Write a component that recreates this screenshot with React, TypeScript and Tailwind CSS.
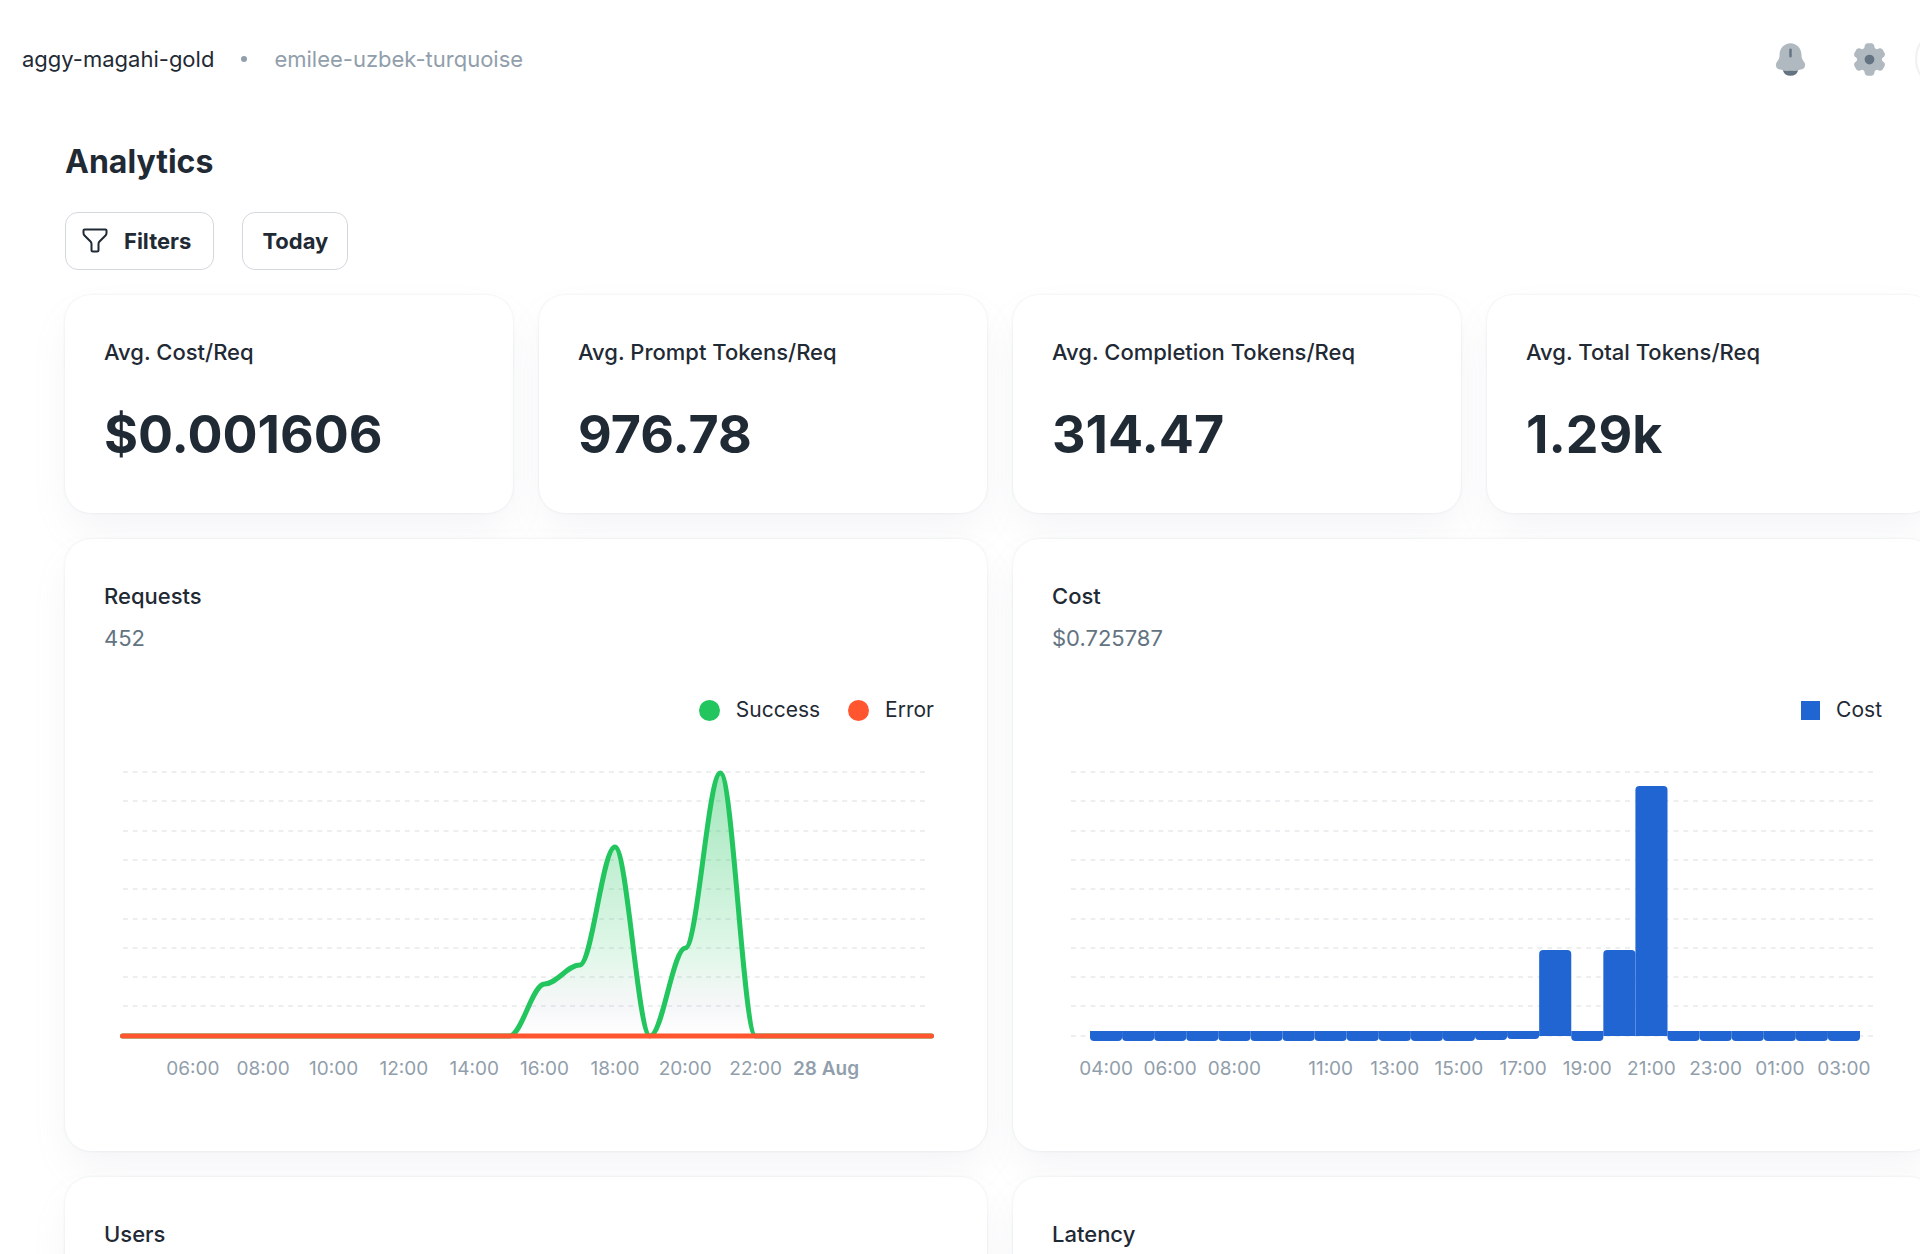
import React from "react";
import clsx from "clsx";

const HOURS = 24;
const GRID_LINES = [47, 76, 106, 135, 164, 194, 223, 252, 281];
const BASELINE = 311;

const stats = [
  { label: "Avg. Cost/Req", value: "$0.001606" },
  { label: "Avg. Prompt Tokens/Req", value: "976.78" },
  { label: "Avg. Completion Tokens/Req", value: "314.47" },
  { label: "Avg. Total Tokens/Req", value: "1.29k" },
];

// height above the baseline for each hour, starting at 04:00
const successSeries = [0, 0, 0, 0, 0, 0, 0, 0, 0, 0, 0, 0, 52, 71, 189, 0, 88, 263, 0, 0, 0, 0, 0, 0];

const requestTicks = [
  { hour: 2, label: "06:00" },
  { hour: 4, label: "08:00" },
  { hour: 6, label: "10:00" },
  { hour: 8, label: "12:00" },
  { hour: 10, label: "14:00" },
  { hour: 12, label: "16:00" },
  { hour: 14, label: "18:00" },
  { hour: 16, label: "20:00" },
  { hour: 18, label: "22:00" },
  { hour: 20, label: "28 Aug", bold: true },
];

const costSeries = [0, 0, 0, 0, 0, 0, 0, 0, 0, 0, 0, 0, 1, 2, 86, 0, 86, 250, 0, 0, 0, 0, 0, 0];

const costTicks = [
  { hour: 0, label: "04:00" },
  { hour: 2, label: "06:00" },
  { hour: 4, label: "08:00" },
  { hour: 7, label: "11:00" },
  { hour: 9, label: "13:00" },
  { hour: 11, label: "15:00" },
  { hour: 13, label: "17:00" },
  { hour: 15, label: "19:00" },
  { hour: 17, label: "21:00" },
  { hour: 19, label: "23:00" },
  { hour: 21, label: "01:00" },
  { hour: 23, label: "03:00" },
];

const BellIcon = () => (
  <svg viewBox="0 0 24 24" className="size-[39px]" fill="currentColor" aria-hidden="true">
    <path
      opacity="0.5"
      d="M18.75 9v.704c0 .845.24 1.671.692 2.374l1.108 1.723c1.011 1.574.239 3.713-1.52 4.21a25.8 25.8 0 0 1-14.06 0c-1.759-.497-2.531-2.636-1.52-4.21l1.108-1.723a4.4 4.4 0 0 0 .693-2.374V9c0-3.866 3.022-7 6.749-7s6.75 3.134 6.75 7"
    />
    <path d="M12.75 6a.75.75 0 0 0-1.5 0v4a.75.75 0 0 0 1.5 0zM7.243 18.545a5.002 5.002 0 0 0 9.513 0c-3.145.59-6.367.59-9.513 0" />
  </svg>
);

const GearIcon = () => (
  <svg viewBox="0.5 0 24 24" className="size-[39px]" fill="currentColor" aria-hidden="true">
    <path
      opacity="0.5"
      d="M14.279 2.152C13.909 2 13.439 2 12.5 2s-1.408 0-1.779.152a2 2 0 0 0-1.09 1.083c-.094.223-.13.484-.145.863a1.62 1.62 0 0 1-.796 1.353 1.64 1.64 0 0 1-1.579.008c-.338-.178-.583-.276-.825-.308a2.03 2.03 0 0 0-1.49.396c-.318.242-.553.646-1.022 1.453-.47.807-.704 1.21-.757 1.605-.07.526.074 1.058.4 1.479.148.192.357.353.68.555.477.297.783.803.783 1.361s-.306 1.064-.782 1.36c-.324.203-.533.364-.682.556a2 2 0 0 0-.399 1.479c.053.394.287.798.757 1.605s.704 1.21 1.022 1.453c.424.323.96.465 1.49.396.242-.032.487-.13.825-.308a1.64 1.64 0 0 1 1.58.008c.486.28.774.795.795 1.353.015.38.051.64.145.863.204.49.596.88 1.09 1.083.37.152.84.152 1.779.152s1.409 0 1.779-.152a2 2 0 0 0 1.09-1.083c.094-.223.13-.483.145-.863.02-.558.309-1.074.796-1.353a1.64 1.64 0 0 1 1.579-.008c.338.178.583.276.825.308.53.07 1.066-.073 1.49-.396.318-.242.553-.646 1.022-1.453.47-.807.704-1.21.757-1.605a2 2 0 0 0-.4-1.479c-.148-.192-.357-.353-.68-.555-.477-.297-.783-.803-.783-1.361s.306-1.064.782-1.36c.324-.203.533-.364.682-.556a2 2 0 0 0 .399-1.479c-.053-.394-.287-.798-.757-1.605s-.704-1.21-1.022-1.453a2.03 2.03 0 0 0-1.49-.396c-.242.032-.487.13-.825.308a1.64 1.64 0 0 1-1.58-.008 1.62 1.62 0 0 1-.795-1.353c-.015-.38-.051-.64-.145-.863a2 2 0 0 0-1.09-1.083"
    />
    <circle cx="12.5" cy="12" r="3" />
  </svg>
);

const FilterIcon = () => (
  <svg viewBox="0 0 26 26" className="size-[26px]" fill="none" stroke="currentColor" strokeWidth="2" strokeLinejoin="round" aria-hidden="true">
    <path d="M2.5 1.5h21q1 0 1 1V5q0 1.5-1 2.5l-6 6q-1 1-1 2.500v6q0 1.500-1.500 1.500h-4q-1.500 0-1.500-1.500v-6q0-1.500-1-2.500l-6-6q-1-1-1-2.500V2.500q0-1 1-1z" />
  </svg>
);

const Card: React.FC<{ className?: string; children: React.ReactNode }> = ({ className, children }) => (
  <section
    className={clsx(
      "rounded-[26px] bg-white px-[39px] pt-[39px] shadow-[0_0_3px_rgba(145,158,171,0.2),0_19px_39px_-6px_rgba(145,158,171,0.12)]",
      className,
    )}
  >
    {children}
  </section>
);

const CardTitle: React.FC<{ children: React.ReactNode }> = ({ children }) => (
  <h2 className="text-[22px] leading-9 font-medium">{children}</h2>
);

const Legend: React.FC<{ items: { label: string; marker: string }[] }> = ({ items }) => (
  <ul className="mt-[39px] flex justify-end gap-7 pr-[14px] text-[21px] leading-[30px]">
    {items.map((item) => (
      <li key={item.label} className="flex items-center gap-4">
        <span className={item.marker} />
        {item.label}
      </li>
    ))}
  </ul>
);

const GridLines: React.FC<{ from: number; to: number; rows: number[] }> = ({ from, to, rows }) => (
  <g stroke="#919eab" strokeOpacity="0.24" strokeWidth="1.5" strokeDasharray="4.86">
    {rows.map((y) => (
      <line key={y} x1={from} x2={to} y1={y} y2={y} />
    ))}
  </g>
);

const TickLabel: React.FC<{ x: number; label: string; bold?: boolean }> = ({ x, label, bold }) => (
  <text x={x} y={350} textAnchor="middle" className={clsx("fill-[#919eab] text-[19px]", bold && "font-semibold")}>
    {label}
  </text>
);

const RequestsChart = () => {
  const step = 809 / (HOURS - 1);
  const x = (hour: number) => 18.5 + hour * step;
  const line = successSeries.slice(1).reduce((d, value, i) => {
    const prev = BASELINE - successSeries[i];
    const y = BASELINE - value;
    const bend = step * 0.35;
    return `${d} C${x(i) + bend} ${prev} ${x(i + 1) - bend} ${y} ${x(i + 1)} ${y}`;
  }, `M${x(0)} ${BASELINE}`);

  return (
    <svg viewBox="0 0 844 387" className="block w-full" role="img" aria-label="Requests per hour">
      <defs>
        <linearGradient id="success-fill" x1="0" y1="0" x2="0" y2="1">
          <stop offset="0" stopColor="#22c55e" stopOpacity="0.42" />
          <stop offset="0.7" stopColor="#22c55e" stopOpacity="0.13" />
          <stop offset="0.9" stopColor="#919eab" stopOpacity="0.08" />
          <stop offset="1" stopColor="#919eab" stopOpacity="0" />
        </linearGradient>
      </defs>
      <GridLines from={19} to={823} rows={GRID_LINES} />
      <path d={`${line} Z`} fill="url(#success-fill)" />
      <path d={line} fill="none" stroke="#22c55e" strokeWidth="5" strokeLinecap="round" />
      <line x1={x(0)} x2={x(23)} y1={BASELINE} y2={BASELINE} stroke="#ff5630" strokeWidth="5" strokeLinecap="round" />
      {requestTicks.map((tick) => (
        <TickLabel key={tick.label} x={x(tick.hour)} label={tick.label} bold={tick.bold} />
      ))}
    </svg>
  );
};

const CostChart = () => {
  const width = 770 / HOURS;
  const x = (hour: number) => 38 + hour * width;

  const bar = (hour: number, value: number) => {
    const left = x(hour);
    const right = left + width;
    if (value > 10) {
      const top = BASELINE - value;
      return `M${left} ${BASELINE} V${top + 4} q0 -4 4 -4 H${right - 4} q4 0 4 4 V${BASELINE} Z`;
    }
    // empty hours hang slightly below the axis
    const bottom = BASELINE + 5 - value;
    return `M${left} 306 V${bottom - 4} q0 4 4 4 H${right - 4} q4 0 4 -4 V306 Z`;
  };

  return (
    <svg viewBox="0 0 844 387" className="block w-full" role="img" aria-label="Cost per hour">
      <GridLines from={19} to={823} rows={[...GRID_LINES, BASELINE]} />
      <g fill="#2065d1">
        {costSeries.map((value, hour) => (
          <path key={hour} d={bar(hour, value)} />
        ))}
      </g>
      {costTicks.map((tick) => (
        <TickLabel key={tick.label} x={x(tick.hour) + width / 2} label={tick.label} />
      ))}
    </svg>
  );
};

const ChartCard: React.FC<{ title: string; total?: string; children?: React.ReactNode }> = ({ title, total, children }) => (
  <Card className="pb-[39px]">
    <CardTitle>{title}</CardTitle>
    {total && <p className="mt-[6px] text-[22px] leading-9 text-[#637381]">{total}</p>}
    {children}
  </Card>
);

const Header = () => (
  <header className="flex h-[118px] items-center justify-between pl-[22px]">
    <nav aria-label="Breadcrumb" className="text-[22px] leading-9">
      <ol className="flex items-center">
        <li>
          <a href="#organization">aggy-magahi-gold</a>
        </li>
        <li aria-hidden="true" className="mx-[27px] size-[6px] rounded-full bg-[#919eab]" />
        <li>
          <a href="#project" className="text-[#919eab]">
            emilee-uzbek-turquoise
          </a>
        </li>
      </ol>
    </nav>
    <div className="-mr-[59px] flex items-center gap-10 text-[#637381]">
      <button type="button" aria-label="Notifications">
        <BellIcon />
      </button>
      <button type="button" aria-label="Settings">
        <GearIcon />
      </button>
      <button type="button" aria-label="Account" className="-ml-[14px] size-16 rounded-full border-2 border-[#919eab]/15" />
    </div>
  </header>
);

export default function App() {
  return (
    <div className="min-h-screen overflow-hidden bg-white font-['Inter','Liberation_Sans',sans-serif] text-[#1f2a35]">
      <Header />
      <main className="mt-6 -mr-[15px] pl-[65px]">
        <h1 className="text-[32px] leading-10 font-bold">Analytics</h1>
        <div className="mt-[30px] flex gap-7 text-[22px] font-bold">
          <button type="button" className="flex h-[58px] items-center gap-4 rounded-[13px] border border-[#919eab]/40 pr-[22px] pl-4">
            <FilterIcon />
            Filters
          </button>
          <button type="button" className="h-[58px] rounded-[13px] border border-[#919eab]/40 px-[19px]">
            Today
          </button>
        </div>
        <div className="mt-[25px] grid grid-cols-4 gap-[26px]">
          {stats.map((stat) => (
            <Card key={stat.label} className="pb-[46px]">
              <CardTitle>{stat.label}</CardTitle>
              <p className="mt-[33px] text-[52px] leading-[64px] font-bold">{stat.value}</p>
            </Card>
          ))}
        </div>
        <div className="mt-[26px] grid grid-cols-2 gap-[26px]">
          <ChartCard title="Requests" total="452">
            <Legend
              items={[
                { label: "Success", marker: "size-[21px] rounded-full bg-[#22c55e]" },
                { label: "Error", marker: "size-[21px] rounded-full bg-[#ff5630]" },
              ]}
            />
            <RequestsChart />
          </ChartCard>
          <ChartCard title="Cost" total="$0.725787">
            <Legend items={[{ label: "Cost", marker: "size-[19px] bg-[#2065d1]" }]} />
            <CostChart />
          </ChartCard>
          <ChartCard title="Users" />
          <ChartCard title="Latency" />
        </div>
      </main>
    </div>
  );
}
